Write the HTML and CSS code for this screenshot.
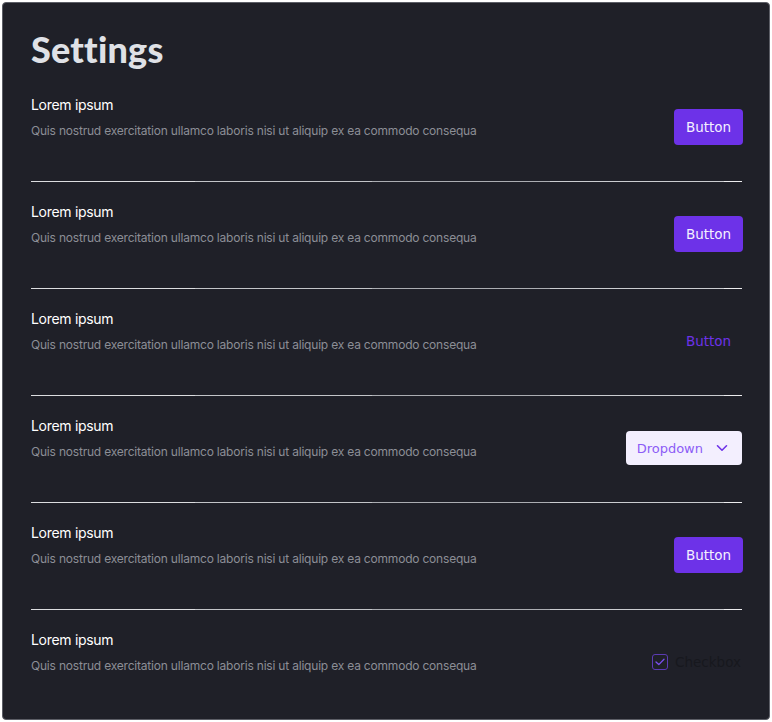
FILE: index.html
```html
<!DOCTYPE html>
<html>
<head>
<meta charset="utf-8">
<link rel="stylesheet" href="styles.css">
</head>
<body>
<div class="card">
  <h1 class="heading">Settings</h1>
  <div class="row">
    <div class="info">
      <div class="title">Lorem ipsum</div>
      <div class="desc">Quis nostrud exercitation ullamco laboris nisi ut aliquip ex ea commodo consequa</div>
    </div>
    <button class="btn">Button</button>
  </div>
  <div class="row">
    <div class="info">
      <div class="title">Lorem ipsum</div>
      <div class="desc">Quis nostrud exercitation ullamco laboris nisi ut aliquip ex ea commodo consequa</div>
    </div>
    <button class="btn">Button</button>
  </div>
  <div class="row">
    <div class="info">
      <div class="title">Lorem ipsum</div>
      <div class="desc">Quis nostrud exercitation ullamco laboris nisi ut aliquip ex ea commodo consequa</div>
    </div>
    <button class="btn btn-text">Button</button>
  </div>
  <div class="row">
    <div class="info">
      <div class="title">Lorem ipsum</div>
      <div class="desc">Quis nostrud exercitation ullamco laboris nisi ut aliquip ex ea commodo consequa</div>
    </div>
    <div class="dropdown">
      <span>Dropdown</span>
      <svg width="12" height="8" viewBox="0 0 12 8"><path d="M1.5 1.8 L6 6.2 L10.5 1.8" fill="none" stroke="#6d32e8" stroke-width="1.6" stroke-linecap="round" stroke-linejoin="round"/></svg>
    </div>
  </div>
  <div class="row">
    <div class="info">
      <div class="title">Lorem ipsum</div>
      <div class="desc">Quis nostrud exercitation ullamco laboris nisi ut aliquip ex ea commodo consequa</div>
    </div>
    <button class="btn">Button</button>
  </div>
  <div class="row last">
    <div class="info">
      <div class="title">Lorem ipsum</div>
      <div class="desc">Quis nostrud exercitation ullamco laboris nisi ut aliquip ex ea commodo consequa</div>
    </div>
    <label class="check">
      <span class="box"><svg width="10" height="8" viewBox="0 0 10 8"><path d="M1 4 L3.8 6.6 L9 1.2" fill="none" stroke="#7c4ef0" stroke-width="1.3" stroke-linecap="round" stroke-linejoin="round"/></svg></span>
      <span class="check-label">Checkbox</span>
    </label>
  </div>
</div>
</body>
</html>
```

FILE: styles.css
```css
html, body {
  margin: 0;
  background: #ffffff;
}
body {
  padding: 2px;
}
.card {
  width: 768px;
  height: 718px;
  box-sizing: border-box;
  background: #1f2028;
  border: 1px solid #5c5e66;
  border-radius: 4px;
  padding: 26px 27px 0 28px;
  font-family: "Inter", "Noto Sans", sans-serif;
}
.heading {
  margin: 0 0 26px 0;
  font-family: "Lato", sans-serif;
  font-weight: 900;
  font-size: 36px;
  line-height: 40px;
  color: #dfe1e6;
  letter-spacing: 0.2px;
}
.row {
  display: flex;
  align-items: center;
  justify-content: space-between;
  padding: 20px 0 41px 0;
  background: linear-gradient(to right, #dcdde0 0 23%, #c3c5c9 23% 48%, #abadb2 48% 73%, #caccd0 73% 97.5%, #ececee 97.5% 100%) left bottom / 100% 1px no-repeat;
}
.row:first-of-type {
  padding-top: 0;
}
.row.last {
  background: none;
}
.info {
  display: flex;
  flex-direction: column;
  gap: 6px;
}
.title {
  font-size: 14px;
  line-height: 20px;
  color: #ffffff;
  font-weight: 400;
  letter-spacing: -0.3px;
}
.desc {
  font-size: 12px;
  line-height: 20px;
  color: #8c8e96;
  letter-spacing: -0.2px;
}
.btn {
  font-family: "DejaVu Sans", sans-serif;
  font-size: 13.5px;
  background: #6d32e8;
  color: #f4f0ff;
  border: none;
  border-radius: 4px;
  height: 36px;
  width: 69px;
  padding: 0;
  margin: 9px -1px -9px 0;
}
.btn-text {
  background: transparent;
  color: #6d32e8;
}
.dropdown {
  display: flex;
  align-items: center;
  gap: 13px;
  height: 34px;
  box-sizing: border-box;
  padding: 0 14px 0 11px;
  margin: 9px 0 -9px 0;
  background: #f3effe;
  border-radius: 4px;
  font-family: "DejaVu Sans", sans-serif;
  font-size: 13px;
  color: #8c5cf6;
}
.check {
  display: flex;
  align-items: center;
  gap: 7px;
  margin: 9px 1px -9px 0;
}
.box {
  width: 16px;
  height: 16px;
  box-sizing: border-box;
  border: 1.5px solid #5b3bb3;
  border-radius: 3px;
  display: flex;
  align-items: center;
  justify-content: center;
}
.check-label {
  font-family: "DejaVu Sans", sans-serif;
  font-size: 13.5px;
  color: #17181e;
}
```
